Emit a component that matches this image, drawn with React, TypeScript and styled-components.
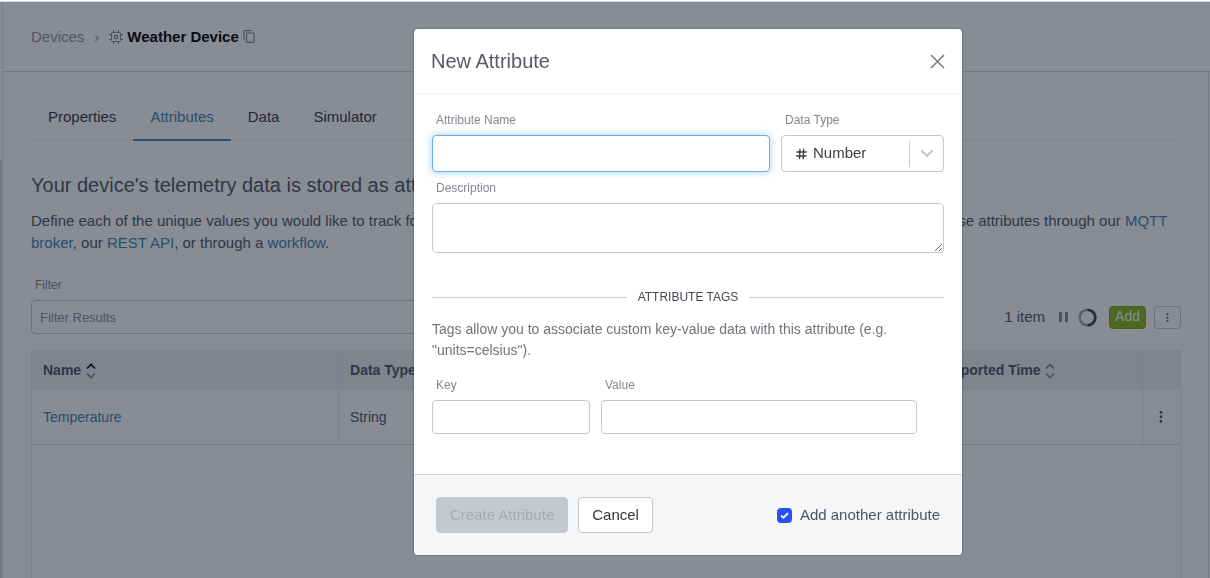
import React from "react";
import styled, { createGlobalStyle, css } from "styled-components";

const GlobalStyle = createGlobalStyle`
  *, *::before, *::after { box-sizing: border-box; }
  html, body, #root { height: 100%; }
  body {
    margin: 0;
    overflow: hidden;
    background: #fff;
    color: #50555f;
    font-family: "Liberation Sans", Arial, sans-serif;
    font-size: 15px;
    line-height: 22px;
  }
  h1, h2, p { margin: 0; font-weight: 400; }
  button, input, textarea, select { font: inherit; color: inherit; }
  a { color: #3c84b8; text-decoration: none; }
`;

const Shell = styled.div`
  display: flex;
  min-height: 100%;
  padding-top: 2px;
`;

const Rail = styled.div`
  flex: 0 0 3px;
  padding-top: 158px;
  border-right: 1px solid #e2e3e8;
  background: #d6d7dc content-box;
`;

const Page = styled.div`
  display: flex;
  flex: 1;
  flex-direction: column;
  min-width: 0;
`;

const TopBar = styled.header`
  display: flex;
  align-items: center;
  height: 70px;
  padding-left: 28px;
  border-bottom: 1px solid #d3d4da;
`;

const Breadcrumb = styled.nav`
  display: flex;
  align-items: center;
  color: #8f929b;

  a { color: inherit; }
  svg { display: block; }
`;

const Chevron = styled.span`
  width: 25px;
  text-align: center;
`;

const DeviceName = styled.strong`
  margin: 0 4px;
  color: #000;
`;

const PlainButton = styled.button`
  display: flex;
  align-items: center;
  justify-content: center;
  padding: 0;
  border: 0;
  background: none;
`;

const Panel = styled.main`
  display: flex;
  flex: 1;
  flex-direction: column;
  margin-right: 1px;
  padding: 21px 27px 0 28px;
  border-right: 1px solid #d3d4da;
`;

const Tabs = styled.nav`
  display: flex;
  border-bottom: 1px solid #e9eaee;
`;

const Tab = styled.a<{ $active?: boolean }>`
  padding: 13px 17px 11px;
  margin-bottom: -1px;
  border-bottom: 2px solid ${(p) => (p.$active ? "#3c84b8" : "transparent")};
  color: ${(p) => (p.$active ? "#3c84b8" : "#32363f")};
`;

const Title = styled.h1`
  margin-top: 30px;
  color: #50555f;
  font-size: 20px;
  line-height: 28px;
`;

const Intro = styled.p`
  margin-top: 11px;
`;

const Toolbar = styled.div`
  display: flex;
  align-items: flex-end;
  justify-content: space-between;
  margin-top: 22px;
`;

const Field = styled.div<{ $grow?: number; $width?: number }>`
  display: flex;
  flex-direction: column;
  min-width: 0;
  ${(p) => p.$grow && css`flex: ${p.$grow} 1 0;`}
  ${(p) => p.$width && css`flex: 0 0 ${p.$width}px;`}
`;

const Label = styled.label`
  padding-left: 4px;
  margin-bottom: 6px;
  color: #84878f;
  font-size: 12px;
  line-height: 18px;
`;

const control = css`
  width: 100%;
  border: 1px solid #c6c7ca;
  border-radius: 4px;
  background: #fff;
  outline: none;
`;

const TextInput = styled.input<{ $tall?: boolean }>`
  ${control}
  height: ${(p) => (p.$tall ? 37 : 34)}px;
  padding: 0 8px;
  font-size: 13px;
  caret-color: transparent;

  &::placeholder { color: #8a8d95; opacity: 1; }
  &:focus {
    border-color: #66afe9;
    box-shadow: 0 0 8px rgba(102, 175, 233, 0.6);
  }
`;

const TextArea = styled.textarea`
  ${control}
  display: block;
  height: 50px;
  padding: 6px 9px;
  resize: vertical;
`;

const Actions = styled.div`
  display: flex;
  align-items: center;
  height: 34px;
`;

const Count = styled.span`
  margin-right: 14px;
`;

const PauseButton = styled(PlainButton)`
  margin-right: 10px;
`;

const AddButton = styled.button`
  height: 23px;
  margin: 0 8px 0 12px;
  padding: 0 5px 2px;
  border: 1px solid #7aa614;
  border-radius: 4px;
  background: #84b817;
  color: #fff;
  font-size: 14px;
  line-height: 18px;
`;

const MoreButton = styled(PlainButton)`
  width: 27px;
  height: 23px;
  border: 1px solid #c6c7ca;
  border-radius: 4px;
`;

const TableFrame = styled.div`
  flex: 1;
  margin-top: 16px;
  border: solid #e6e7eb;
  border-width: 0 1px;
`;

const Table = styled.table`
  width: 100%;
  border-collapse: collapse;
  table-layout: fixed;
  font-size: 14px;

  th, td {
    padding: 0 11px;
    border-right: 1px solid #e6e7eb;
    text-align: left;
    white-space: nowrap;
  }
  th { height: 40px; background: #eeeff4; }
  td { height: 54px; border-bottom: 1px solid #dcdde1; }
  th:last-child, td:last-child { padding: 0; border-right: 0; }
  svg { vertical-align: middle; }
`;

const NameCol = styled.col`
  width: 26.7%;
`;

const TimeCol = styled.col`
  width: 21.2%;
`;

const MenuCol = styled.col`
  width: 38px;
`;

const RowMenuButton = styled(PlainButton)`
  margin: 0 auto;
`;

const Backdrop = styled.div`
  position: fixed;
  inset: 1px 0 0;
  display: flex;
  align-items: flex-start;
  justify-content: center;
  padding: 27px 12px 0 178px;
  border-top: 1px solid rgba(136, 140, 148, 0.3);
  background: rgba(17, 25, 41, 0.5);
  background-clip: padding-box;
`;

const Modal = styled.section`
  width: 548px;
  max-width: 100%;
  overflow: hidden;
  border-radius: 4px;
  background: #fff;
  box-shadow: 0 0 2px rgba(0, 0, 0, 0.5);
`;

const ModalHeader = styled.header`
  display: flex;
  align-items: center;
  justify-content: space-between;
  height: 65px;
  padding: 0 17px;
  border-bottom: 1px solid #eff0f2;

  h2 { font-size: 20px; line-height: 28px; color: #565a63; }
`;

const ModalBody = styled.div`
  padding: 17px 18px 40px;
`;

const Row = styled.div<{ $inset?: boolean }>`
  display: flex;
  gap: 11px;
  padding-right: ${(p) => (p.$inset ? 27 : 0)}px;
`;

const DescriptionField = styled(Field)`
  margin-top: 7px;
`;

const SelectBox = styled.div`
  ${control}
  display: grid;
  grid-template-columns: 31px 1fr 34px;
  align-items: center;
  height: 37px;

  svg { display: block; }
`;

const SelectIcon = styled.span`
  grid-area: 1 / 1;
  justify-self: end;
  margin-right: 6px;
`;

const SelectArrow = styled.span`
  grid-area: 1 / 3;
  display: grid;
  place-items: center;
  height: 26px;
  border-left: 1px solid #ccc;
`;

const Select = styled.select`
  grid-area: 1 / 1 / 2 / 4;
  width: 100%;
  height: 35px;
  padding: 0 36px 2px 31px;
  border: 0;
  outline: none;
  appearance: none;
  background: transparent;
  color: #3a3d44;
`;

const Divider = styled.div`
  display: flex;
  align-items: center;
  gap: 11px;
  margin: 34px 0 12px;
  font-size: 12px;
  line-height: 20px;
  color: #444851;

  &::before, &::after {
    content: "";
    flex: 1;
    height: 1px;
    background: #cdced1;
  }
`;

const Help = styled.p`
  margin-bottom: 15px;
  color: #70737a;
  font-size: 14px;
  line-height: 21px;
`;

const ModalFooter = styled.footer`
  display: flex;
  align-items: center;
  gap: 10px;
  height: 81px;
  padding: 0 22px;
  border-top: 1px solid #d2d4d8;
  background: #f4f6f8;
`;

const Button = styled.button`
  height: 36px;
  padding: 0 13px;
  border: 1px solid #c6c7ca;
  border-radius: 4px;
  background: #fff;
  color: #32353b;

  &:disabled {
    border-color: #c5c8cd;
    background: #c5c8cd;
    color: #a8abb0;
  }
`;

const CheckLabel = styled.label`
  display: flex;
  align-items: center;
  gap: 8px;
  margin-left: auto;
`;

const Checkbox = styled.input`
  width: 15px;
  height: 15px;
  margin: 0;
  border-radius: 4px;
  appearance: none;
  background: #2850f5;

  &:checked {
    background: #2850f5 url("data:image/svg+xml,%3Csvg xmlns='http://www.w3.org/2000/svg' viewBox='0 0 15 15'%3E%3Cpath d='M4.2 7.6l2.2 2.1 4.6-4.6' fill='none' stroke='white' stroke-width='2'/%3E%3C/svg%3E");
  }
`;

const ChipIcon = () => (
  <svg width="14" height="14" viewBox="0 0 14 14" fill="none" stroke="#868991">
    <rect x="2.5" y="2.5" width="9" height="9" rx="1" />
    <rect x="5.5" y="5.5" width="3" height="3" />
    <path d="M4.5 0v2.5M9.5 0v2.5M4.5 11.5V14M9.5 11.5V14M0 4.5h2.5M0 9.5h2.5M11.5 4.5H14M11.5 9.5H14" />
  </svg>
);

const CopyIcon = () => (
  <svg width="12" height="13" viewBox="0 0 12 13" fill="none" stroke="#868991" strokeWidth="1.2">
    <rect x="3.5" y="3" width="7.5" height="9.3" rx="0.8" />
    <path d="M1 9.8V1.6q0-1 1-1h6.5" />
  </svg>
);

const SortIcon = ({ asc }: { asc?: boolean }) => (
  <svg width="12" height="16" viewBox="0 0 12 16" fill="none" strokeWidth="1.6">
    <path d="M2 5.5l4-4 4 4" stroke={asc ? "#000" : "#81848c"} />
    <path d="M2 10.5l4 4 4-4" stroke="#81848c" />
  </svg>
);

const DotsIcon = () => (
  <svg width="4" height="14" viewBox="0 0 4 14" fill="#50555f">
    <circle cx="2" cy="2.5" r="1.4" />
    <circle cx="2" cy="7" r="1.4" />
    <circle cx="2" cy="11.5" r="1.4" />
  </svg>
);

const SmallDotsIcon = () => (
  <svg width="3" height="9" viewBox="0 0 3 9" fill="#50555f">
    <circle cx="1.5" cy="1.2" r="1" />
    <circle cx="1.5" cy="4.5" r="1" />
    <circle cx="1.5" cy="7.8" r="1" />
  </svg>
);

const PauseIcon = () => (
  <svg width="9" height="10" viewBox="0 0 9 10" fill="#868991">
    <path d="M0 0h3v10H0zM6 0h3v10H6z" />
  </svg>
);

const Spinner = () => (
  <svg width="19" height="19" viewBox="0 0 19 19" fill="none" strokeWidth="2.6">
    <circle cx="9.5" cy="9.5" r="7.8" stroke="#a4a7ae" />
    <path d="M9.5 1.7a7.8 7.8 0 0 1 0 15.6" stroke="#3c404c" />
  </svg>
);

const CloseIcon = () => (
  <svg width="15" height="15" viewBox="0 0 15 15" fill="none" stroke="#7c7f87" strokeWidth="1.6">
    <path d="M1 1l13 13M14 1L1 14" />
  </svg>
);

const HashIcon = () => (
  <svg width="11" height="12" viewBox="0 0 11 12" fill="none" stroke="#3a3d44" strokeWidth="1.3">
    <path d="M4 .8L3.5 11.2M7.7 .8L7.2 11.2M.5 4h10.3M.2 8h10.3" />
  </svg>
);

const DownIcon = () => (
  <svg width="14" height="9" viewBox="0 0 14 9" fill="none" stroke="#c4c4c4" strokeWidth="2.2" strokeLinecap="round">
    <path d="M2 2l5 5 5-5" />
  </svg>
);

export default function App() {
  return (
    <>
      <GlobalStyle />
      <Shell>
        <Rail />
        <Page>
          <TopBar>
            <Breadcrumb aria-label="Breadcrumb">
              <a href="#devices">Devices</a>
              <Chevron>›</Chevron>
              <ChipIcon />
              <DeviceName>Weather Device</DeviceName>
              <PlainButton type="button" aria-label="Copy"><CopyIcon /></PlainButton>
            </Breadcrumb>
          </TopBar>
          <Panel>
            <Tabs>
              <Tab href="#properties">Properties</Tab>
              <Tab href="#attributes" $active>Attributes</Tab>
              <Tab href="#data">Data</Tab>
              <Tab href="#simulator">Simulator</Tab>
            </Tabs>
            <Title>Your device's telemetry data is stored as attributes.</Title>
            <Intro>
              Define each of the unique values you would like to track for this device, such as temperature or voltage levels over time. Report state for these attributes through our{" "}
              <a href="#mqtt">MQTT broker</a>, our <a href="#rest">REST API</a>, or through a <a href="#workflow">workflow</a>.
            </Intro>
            <Toolbar>
              <Field $width={420}>
                <Label htmlFor="filter">Filter</Label>
                <TextInput id="filter" placeholder="Filter Results" />
              </Field>
              <Actions>
                <Count>1 item</Count>
                <PauseButton type="button" aria-label="Pause"><PauseIcon /></PauseButton>
                <Spinner />
                <AddButton type="button">Add</AddButton>
                <MoreButton type="button" aria-label="More"><SmallDotsIcon /></MoreButton>
              </Actions>
            </Toolbar>
            <TableFrame>
              <Table>
                <colgroup>
                  <NameCol />
                  <col />
                  <TimeCol />
                  <MenuCol />
                </colgroup>
                <thead>
                  <tr>
                    <th>Name <SortIcon asc /></th>
                    <th>Data Type</th>
                    <th>Last Reported Time <SortIcon /></th>
                    <th aria-label="Actions" />
                  </tr>
                </thead>
                <tbody>
                  <tr>
                    <td><a href="#temperature">Temperature</a></td>
                    <td>String</td>
                    <td />
                    <td><RowMenuButton type="button" aria-label="Row menu"><DotsIcon /></RowMenuButton></td>
                  </tr>
                </tbody>
              </Table>
            </TableFrame>
          </Panel>
        </Page>
      </Shell>
      <Backdrop>
        <Modal role="dialog" aria-labelledby="modal-title">
          <ModalHeader>
            <h2 id="modal-title">New Attribute</h2>
            <PlainButton type="button" aria-label="Close"><CloseIcon /></PlainButton>
          </ModalHeader>
          <ModalBody>
            <Row>
              <Field $grow={1}>
                <Label htmlFor="name">Attribute Name</Label>
                <TextInput id="name" $tall autoFocus />
              </Field>
              <Field $width={163}>
                <Label htmlFor="type">Data Type</Label>
                <SelectBox>
                  <SelectIcon><HashIcon /></SelectIcon>
                  <SelectArrow><DownIcon /></SelectArrow>
                  <Select id="type" defaultValue="number">
                    <option value="number">Number</option>
                    <option value="string">String</option>
                  </Select>
                </SelectBox>
              </Field>
            </Row>
            <DescriptionField>
              <Label htmlFor="description">Description</Label>
              <TextArea id="description" />
            </DescriptionField>
            <Divider>ATTRIBUTE TAGS</Divider>
            <Help>Tags allow you to associate custom key-value data with this attribute (e.g. "units=celsius").</Help>
            <Row $inset>
              <Field $grow={1}>
                <Label htmlFor="key">Key</Label>
                <TextInput id="key" />
              </Field>
              <Field $grow={2}>
                <Label htmlFor="value">Value</Label>
                <TextInput id="value" />
              </Field>
            </Row>
          </ModalBody>
          <ModalFooter>
            <Button type="button" disabled>Create Attribute</Button>
            <Button type="button">Cancel</Button>
            <CheckLabel>
              <Checkbox type="checkbox" defaultChecked />
              Add another attribute
            </CheckLabel>
          </ModalFooter>
        </Modal>
      </Backdrop>
    </>
  );
}
